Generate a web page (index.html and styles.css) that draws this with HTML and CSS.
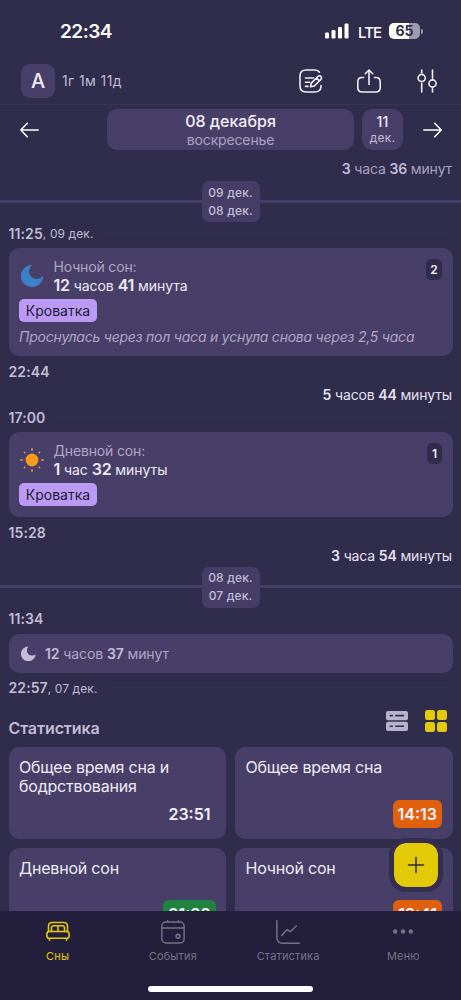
FILE: index.html
```
<!DOCTYPE html>
<html lang="ru">
<head>
<meta charset="utf-8">
<meta name="viewport" content="width=device-width, initial-scale=1">
<title>Сны</title>
<link rel="stylesheet" href="styles.css">
</head>
<body>
<div class="app">
  <header class="status">
    <span class="clock">22:34</span>
    <div class="status-right">
      <svg class="signal" width="24" height="16" viewBox="0 0 24 16" fill="#fff"><rect x="0" y="9.5" width="4" height="6" rx="1.2"/><rect x="6.5" y="7" width="4" height="8.5" rx="1.2"/><rect x="13" y="4" width="4" height="11.5" rx="1.2"/><rect x="19.5" y="0.5" width="4" height="15" rx="1.2"/></svg>
      <span class="net">LTE</span>
      <div class="battery"><span>65</span></div><i class="battery-tip"></i>
    </div>
  </header>

  <div class="profile">
    <span class="avatar">А</span>
    <span class="age">1г 1м 11д</span>
    <div class="actions">
      <svg width="24" height="24" viewBox="0 0 24 24" fill="none" stroke="#f1eef8" stroke-width="1.6" stroke-linecap="round" stroke-linejoin="round"><path d="M20.5 3.2C19.6 1.8 18.5 1 16 1H7Q1 1 1 7v10q0 6 6 6h8.5q6 0 6.5-5v-1.5"/><path d="M6.5 9h8M6.5 13.2h4M6.5 17.4h2.500"/><path d="M11.500 17.800l.8-3.700 6.600-6.600a2 2 0 0 1 3 2.900l-6.600 6.600zM17.500 9l2.900 2.800"/></svg>
      <svg width="24" height="24" viewBox="0 0 24 24" fill="none" stroke="#f1eef8" stroke-width="1.6" stroke-linecap="round" stroke-linejoin="round"><path d="M6.500 8.500H5Q.8 8.500.8 13v5.500Q.8 23 5.300 23h13.400q4.500 0 4.500-4.500V13q0-4.500-4.200-4.500h-1.500M12 15.500V1M8.300 4.700L12 1l3.700 3.700"/></svg>
      <svg width="24" height="24" viewBox="0 0 24 24" fill="none" stroke="#f1eef8" stroke-width="1.6" stroke-linecap="round"><circle cx="6.700" cy="9" r="3.600"/><circle cx="17.500" cy="14.500" r="3.600"/><path d="M6.700 1v2.700M6.700 14.500V23M17.500 1v8.200M17.500 19.800V23"/></svg>
    </div>
  </div>

  <nav class="datebar">
    <svg width="19" height="16" viewBox="0 0 19 16" fill="none" stroke="#fff" stroke-width="1.5" stroke-linecap="round" stroke-linejoin="round"><path d="M18.300 8H.8M7.300 1.200L.8 8l6.500 6.800"/></svg>
    <div class="day"><b>08 декабря</b><span>воскресенье</span></div>
    <div class="today"><b>11</b><span>дек.</span></div>
    <svg width="19" height="16" viewBox="0 0 19 16" fill="none" stroke="#fff" stroke-width="1.5" stroke-linecap="round" stroke-linejoin="round"><path d="M.8 8h17.500M11.700 1.200L18.300 8l-6.600 6.800"/></svg>
  </nav>

  <main class="feed">
    <p class="gap gap-dim"><b>3</b> часа <b>36</b> минут</p>
    <div class="split"><div class="split-label"><span>09 дек.</span><span>08 дек.</span></div></div>

    <div class="time"><b>11:25</b><span>, 09 дек.</span></div>
    <article class="card card-note">
      <div class="card-head">
        <svg class="icon" width="24" height="24" viewBox="0 0 24 24"><path fill="#3d80c5" d="M12.200 1A7.700 7.700 0 1 0 23.100 11.500 11.100 11.100 0 1 1 12.200 1z"/></svg>
        <div class="sleep"><span class="kind">Ночной сон:</span><span class="length"><b>12</b> часов <b>41</b> минута</span></div>
        <span class="count">2</span>
      </div>
      <span class="tag">Кроватка</span>
      <p class="note">Проснулась через пол часа и уснула снова через 2,5 часа</p>
    </article>
    <div class="time"><b>22:44</b></div>
    <p class="gap gap-between"><b>5</b> часов <b>44</b> минуты</p>
    <div class="time"><b>17:00</b></div>
    <article class="card card-day">
      <div class="card-head">
        <svg class="icon" width="24" height="24" viewBox="0 0 24 24"><circle cx="12" cy="12" r="6.400" fill="#f99a1c"/><path d="M12 .8v1.400M12 21.800v1.400M.8 12h1.400M21.800 12h1.400M4.300 4.300l.5.500M19.200 19.200l.5.500M4.300 19.700l.5-.5M19.200 4.800l.5-.5" stroke="#e8a04c" stroke-width="1.500" stroke-linecap="round"/></svg>
        <div class="sleep"><span class="kind">Дневной сон:</span><span class="length"><b>1</b> час <b>32</b> минуты</span></div>
        <span class="count count-one">1</span>
      </div>
      <span class="tag">Кроватка</span>
    </article>
    <div class="time"><b>15:28</b></div>
    <p class="gap gap-last"><b>3</b> часа <b>54</b> минуты</p>
    <div class="split"><div class="split-label"><span>08 дек.</span><span>07 дек.</span></div></div>
    <div class="time"><b>11:34</b></div>
    <article class="card card-small">
      <svg width="15" height="15" viewBox="0 0 24 24"><path fill="#c5bdd8" d="M12 .8A7.500 7.500 0 1 0 23.500 13 11.800 11.800 0 1 1 12 .8z"/></svg>
      <span><b>12</b> часов <b>37</b> минут</span>
    </article>
    <div class="time"><b>22:57</b><span>, 07 дек.</span></div>

    <div class="stats-head">
      <h2>Статистика</h2>
      <svg width="22" height="22" viewBox="0 0 22 22"><rect y="1" width="22" height="9.300" rx="2" fill="#b9b2cd"/><rect y="11.700" width="22" height="9.300" rx="2" fill="#b9b2cd"/><path d="M4.300 5.600h2M9.800 5.600h7.700M4.300 16.300h2M9.800 16.300h7.700" stroke="#302c4b" stroke-width="1.600" stroke-linecap="round"/></svg>
      <svg width="22" height="22" viewBox="0 0 22 22" fill="#e3ca08"><rect width="10" height="10" rx="2.500"/><rect x="12" width="10" height="10" rx="2.500"/><rect y="12" width="10" height="10" rx="2.500"/><rect x="12" y="12" width="10" height="10" rx="2.500"/></svg>
    </div>
    <section class="tiles">
      <div class="tile"><h3>Общее время сна и бодрствования</h3><span class="value">23:51</span></div>
      <div class="tile"><h3>Общее время сна</h3><span class="value orange">14:13</span></div>
      <div class="tile"><h3>Дневной сон</h3><span class="value green">01:32</span></div>
      <div class="tile"><h3>Ночной сон</h3><span class="value orange">12:41</span></div>
    </section>
    <button class="add" aria-label="Добавить"><svg width="18" height="18" viewBox="0 0 18 18" stroke="#302c30" stroke-width="1.500" stroke-linecap="round"><path d="M9 1.500v15M1.500 9h15"/></svg></button>
  </main>

  <footer class="tabs">
    <div class="tab active">
      <svg width="24" height="24" viewBox="0 0 24 24" fill="none" stroke="currentColor" stroke-width="1.600" stroke-linecap="round" stroke-linejoin="round"><path d="M2.500 11.500V6.200Q2.500 2.500 6.500 2.500h11q4 0 4 3.700v5.300"/><path d="M5.500 11.500V7.900q0-2.200 2.200-2.200h8.600q2.200 0 2.200 2.200v3.600M12 5.700v5.800"/><rect x=".9" y="11.500" width="22.200" height="6.800" rx="2.300"/><path d="M3.500 18.500v1.800M20.500 18.500v1.800"/></svg>
      <span>Сны</span>
    </div>
    <div class="tab">
      <svg width="24" height="24" viewBox="0 0 24 24" fill="none" stroke="currentColor" stroke-width="1.400" stroke-linecap="round"><rect x=".9" y="2" width="22.200" height="21" rx="4"/><path d="M1 8h22M6.700.7V2M17.300.7V2"/><circle cx="17" cy="16.300" r="1.900" stroke-width="1.600"/></svg>
      <span>События</span>
    </div>
    <div class="tab">
      <svg width="24" height="24" viewBox="0 0 24 24" fill="none" stroke="currentColor" stroke-width="1.500" stroke-linecap="round" stroke-linejoin="round"><path d="M.9.800v16.400q0 6 6 6H23.200M5.800 15.500l4.300-5q1-1.200 2.200-.2l.8.700q1.300 1 2.300-.2L20.300 6"/></svg>
      <span>Статистика</span>
    </div>
    <div class="tab">
      <svg width="24" height="24" viewBox="0 0 24 24" fill="currentColor"><circle cx="4.200" cy="11.500" r="2.200"/><circle cx="12" cy="11.500" r="2.200"/><circle cx="19.800" cy="11.500" r="2.200"/></svg>
      <span>Меню</span>
    </div>
    <i class="home"></i>
  </footer>
</div>
</body>
</html>
```
FILE: styles.css
```
* { box-sizing: border-box; }
body { margin: 0; background: #302c4b; }
p, h2, h3 { margin: 0; }
svg { display: block; flex: none; }
b { font-weight: 500; }

.app {
  width: 461px;
  height: 1000px;
  overflow: hidden;
  display: flex;
  flex-direction: column;
  background: #302c4b;
  color: #c2bcd6;
  font-family: Inter, "Noto Sans", sans-serif;
  font-size: 14px;
}

.status {
  height: 62px;
  padding: 0 38px 0 60px;
  display: flex;
  align-items: center;
  justify-content: space-between;
  color: #fff;
}
.clock { font-size: 19px; font-weight: 600; letter-spacing: -0.5px; padding-top: 1px; }
.status-right { display: flex; align-items: center; }
.net { margin-left: 9.500px; width: 24px; font-size: 15px; font-weight: 500; letter-spacing: -0.9px; padding-top: 2px; }
.battery {
  margin-left: 7px;
  width: 31px;
  height: 16px;
  border-radius: 5px;
  background: linear-gradient(90deg, #fff 65%, #9e9aae 65%);
  color: #302c4b;
  font-size: 14px;
  font-weight: 700;
  line-height: 16.500px;
  text-align: center;
}
.battery-tip { width: 2px; height: 5px; margin-left: 1px; border-radius: 0 2px 2px 0; background: #9e9aae; }

.profile {
  height: 43px;
  padding: 2px 22px 0 21px;
  display: flex;
  align-items: flex-start;
  border-bottom: 1px solid #3a3555;
}
.avatar {
  width: 34px;
  height: 34px;
  border-radius: 9px;
  background: #483f69;
  color: #eeebf5;
  font-size: 20px;
  font-weight: 500;
  line-height: 35px;
  text-align: center;
}
.age { margin-left: 7px; line-height: 34px; font-size: 14px; letter-spacing: 0.4px; }
.actions { margin-left: auto; padding-top: 5px; display: flex; gap: 34px; }

.datebar {
  height: 54px;
  padding: 4px 19px 0 20px;
  display: flex;
  align-items: flex-start;
}
.datebar > svg { margin-top: 12.500px; }
.day, .today {
  height: 41px;
  border-radius: 10px;
  background: #483f69;
  display: flex;
  flex-direction: column;
  align-items: center;
}
.day { width: 247px; margin-left: 68px; }
.day b { font-size: 16px; line-height: 19px; padding-top: 3px; color: #f3f0fa; }
.day span { font-size: 14px; line-height: 17px; color: #aaa2c1; letter-spacing: -0.15px; }
.today { width: 41px; margin: 0 20px 0 8px; }
.today b { font-size: 14px; line-height: 18px; padding-top: 4px; color: #eeebf5; letter-spacing: 0.3px; }
.today span { font-size: 12px; line-height: 13px; letter-spacing: 0.2px; }

.feed { position: relative; height: 752px; overflow: hidden; }
.gap { height: 16px; padding-right: 9px; text-align: right; line-height: 17px; color: #e5e0f0; letter-spacing: -0.15px; }
.gap b { font-weight: 600; }
.gap-dim { height: 22px; line-height: 20px; color: #aaa2c1; }
.gap-dim b { color: #c2bcd6; }
.gap-last { height: 19.500px; }

.split { height: 37px; display: flex; align-items: flex-start; }
.split::before, .split::after { content: ""; flex: 1; height: 3px; margin-top: 18.500px; background: #453d65; }
.split-label {
  width: 58px;
  height: 41px;
  padding: 2.500px 0;
  border-radius: 7px;
  background: #453d65;
  display: flex;
  flex-direction: column;
  align-items: center;
  font-size: 12px;
  font-weight: 500;
  line-height: 18px;
  letter-spacing: 0.15px;
}

.time {
  height: 30px;
  padding: 0 9px 0 8.500px;
  display: flex;
  align-items: center;
}
.time b { font-size: 14px; font-weight: 600; letter-spacing: 0.1px; }
.time span { font-size: 12px; padding-top: 1px; letter-spacing: 0.1px; }
.time::after { content: ""; flex: 1; height: 1px; margin-left: 11px; background: #342f4e; }

.card {
  margin: 0 8.500px;
  border-radius: 10px;
  background: #483f69;
}
.card-note { height: 108px; padding: 11px 10.500px; }
.card-day { height: 85px; padding: 11px 10.500px; }
.card-head { display: flex; height: 37px; }
.icon { margin: 5px 9.500px 0 1px; }
.sleep { display: flex; flex-direction: column; }
.kind { line-height: 16px; color: #aea6c4; letter-spacing: -0.15px; }
.length { line-height: 20px; color: #ece8f5; letter-spacing: -0.05px; }
.length b { font-size: 16px; font-weight: 600; letter-spacing: -0.2px; }
.count {
  margin-left: auto;
  width: 16px;
  height: 21px;
  border-radius: 5px;
  background: #302c4b;
  color: #eeebf5;
  font-size: 12px;
  font-weight: 600;
  line-height: 21px;
  text-align: center;
}
.count-one { width: 15px; }
.tag {
  display: block;
  width: 78px;
  height: 23px;
  margin-top: 3px;
  border-radius: 5px;
  background: #ba9af5;
  color: #211b35;
  font-size: 14px;
  line-height: 23px;
  text-align: center;
}
.note { margin-top: 6px; line-height: 17px; font-style: italic; white-space: nowrap; color: #aea6c4; letter-spacing: -0.23px; }
.card-small { height: 39px; padding: 0 12px; display: flex; align-items: center; gap: 9.500px; color: #aea6c4; letter-spacing: -0.1px; }
.card-small b { color: #c2bcd6; font-weight: 600; }

.stats-head { height: 44.500px; padding: 7.500px 14.500px 0 8.500px; display: flex; align-items: flex-start; }
.stats-head h2 { margin: 8px auto 0 0; font-size: 16px; font-weight: 600; line-height: 20px; letter-spacing: -0.1px; }
.stats-head svg + svg { margin-left: 17px; }
.tiles { padding: 0 8.500px; display: grid; grid-template-columns: 1fr 1fr; grid-auto-rows: 91.500px; gap: 9px; }
.tile {
  border-radius: 10px;
  background: #483f69;
  padding: 11px 10.500px;
  display: flex;
  flex-direction: column;
  justify-content: space-between;
}
.tile h3 { font-size: 16px; font-weight: 400; line-height: 19px; color: #eeebf5; letter-spacing: -0.2px; }
.value {
  align-self: flex-end;
  height: 28px;
  padding: 0 5px;
  border-radius: 6px;
  color: #f3f0fa;
  font-size: 16px;
  font-weight: 600;
  line-height: 28px;
}
.orange { background: #e1600c; }
.green { background: #208341; }
.add {
  position: absolute;
  right: 18px;
  bottom: 19px;
  width: 54px;
  height: 54px;
  padding: 0;
  border: 5px solid #352e51;
  border-radius: 17px;
  background: #e3ca08;
  background-clip: padding-box;
  display: flex;
  align-items: center;
  justify-content: center;
}

.tabs {
  position: relative;
  flex: 1;
  background: #221e3c;
  display: grid;
  grid-template-columns: repeat(4, 1fr);
}
.tab {
  padding-top: 8.500px;
  display: flex;
  flex-direction: column;
  align-items: center;
  color: #777284;
  font-size: 11px;
  letter-spacing: 0.15px;
}
.tab span { margin-top: 5px; line-height: 15px; }
.active { color: #e3ca08; }
.home {
  position: absolute;
  left: 148px;
  bottom: 8px;
  width: 165px;
  height: 6px;
  border-radius: 3px;
  background: #fff;
}
```
